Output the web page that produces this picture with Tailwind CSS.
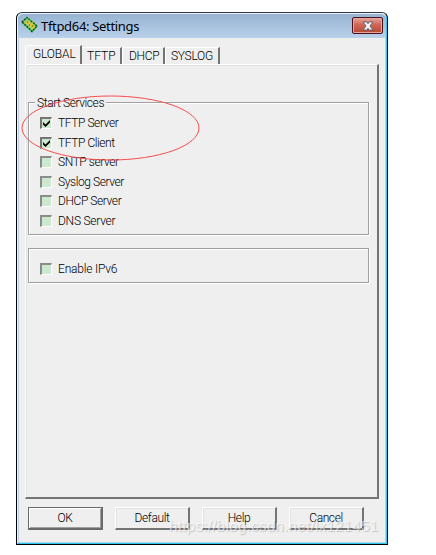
<!DOCTYPE html>
<html lang="en">
<head>
<meta charset="utf-8">
<title>Tftpd64: Settings</title>
<script src="https://cdn.jsdelivr.net/npm/@tailwindcss/browser@4"></script>
</head>
<body class="bg-white w-[436px] h-[555px] overflow-hidden pl-4 pt-3 font-[Roboto,'Liberation_Sans',sans-serif] font-[350] text-[12px] leading-[14px] text-black">
<main class="relative w-[372px] h-[533px] flex flex-col bg-[#efefef] border border-black border-t-[#303840] rounded-t-[6px] shadow-[inset_-1px_-1px_0_#25c9ee,inset_1px_1px_0_#e8f4ff,inset_-2px_-2px_0_#b9d1ea,inset_2px_0_0_#b9d1ea]">
  <header class="h-[24px] shrink-0 mx-px mt-px flex items-start rounded-t-[5px] bg-gradient-to-b from-[#98b4d2] to-[#b9d1ea]">
    <svg class="ml-[3px] mt-[2px] shrink-0" width="17" height="18" viewBox="0 0 17 18">
      <path d="M1 6 6 1.500 16 10 11 15.500Z" fill="#9dbd8c" stroke="#20b52c" stroke-width="1.300"/>
      <path d="M1 6 6 1.500 16 10 11 15.500Z" fill="none" stroke="#0a3d12" stroke-width="1.300" stroke-dasharray="1.500 1.500"/>
      <path d="M4 5.500 6.500 8 8 5.500 9 10 11 7.500 11.500 12 13.500 10.500" stroke="#d9c92c" stroke-width="1.700" fill="none"/>
      <path d="M6 6h1M8 9h1M11 10h1" stroke="#5c4d16"/>
    </svg>
    <h1 class="ml-[3px] mt-[4px] text-[13px] leading-[16px] tracking-[-0.32px] whitespace-nowrap font-normal font-['Noto_Sans','Open_Sans',sans-serif]">Tftpd64: Settings</h1>
    <button aria-label="Close" class="ml-auto mr-[3px] mt-[3px] w-[31px] h-[17px] border border-[#481221] rounded-[2px] bg-gradient-to-b from-[#e7a59b] via-[#ce6656] via-45% to-[#b94730] shadow-[inset_0_0_0_1px_#e9a59b] flex justify-center items-center">
      <svg width="12" height="10" viewBox="0 0 13 11"><path d="M1 1h4l1.500 2L8 1h4L8.700 5.500 12 10H8L6.500 8 5 10H1l3.300-4.500Z" fill="#f5f5f5" stroke="#555b70"/></svg>
    </button>
  </header>

  <nav class="flex items-end h-[26px] shrink-0 pl-[8px]">
    <div class="w-[57px] h-[19px] border-l border-t border-white border-r-2 border-r-[#747474] rounded-tl-[2px] pl-[7px] pt-px tracking-[-0.15px]">GLOBAL</div>
    <div class="w-[40px] h-[17px] border-t border-white border-r-2 border-r-[#747474] pl-[5px] pt-px tracking-[0px]">TFTP</div>
    <div class="w-[43px] h-[17px] border-l border-t border-white border-r-2 border-r-[#747474] pl-[6px] pt-px tracking-[-0.3px]">DHCP</div>
    <div class="w-[55px] h-[17px] border-l border-t border-white border-r-2 border-r-[#747474] pl-[5px] pt-px tracking-[-0.3px]">SYSLOG</div>
  </nav>

  <section class="ml-[8px] w-[354px] h-[435px] shrink-0 border-l border-t border-white border-r-2 border-b-2 border-r-[#747474] border-b-[#747474] shadow-[inset_1px_1px_0_#e2e2e2] pl-[2px] pt-[37px] tracking-[-0.42px]">
    <fieldset class="relative w-[341px] h-[133px] border border-[#a0a0a0] shadow-[1px_1px_0_white,inset_1px_1px_0_white]">
      <div class="absolute left-[6px] top-[-7px] px-[2px] bg-[#efefef]">Start Services</div>
      <div class="flex flex-col pt-[10px] pl-[11px]">
        <label class="flex items-center h-[20px]"><span class="w-3 h-3 mr-[6px] bg-[#cce8cf] border-t-2 border-l-2 border-[#747474] border-r border-b border-r-white border-b-white"><svg width="9" height="9" viewBox="0 0 9 9"><path d="m1 3 2.500 2.500L8 1v2.500L3.500 8 1 5.500Z"/></svg></span>TFTP Server</label>
        <label class="flex items-center h-[20px]"><span class="w-3 h-3 mr-[6px] bg-[#cce8cf] border-t-2 border-l-2 border-[#747474] border-r border-b border-r-white border-b-white"><svg width="9" height="9" viewBox="0 0 9 9"><path d="m1 3 2.500 2.500L8 1v2.500L3.500 8 1 5.500Z"/></svg></span>TFTP Client</label>
        <label class="flex items-center h-[18px]"><span class="w-3 h-3 mr-[6px] bg-[#cce8cf] border-t-2 border-l-2 border-[#8b8b8b] border-r border-b border-r-white border-b-white"></span>SNTP server</label>
        <label class="flex items-center h-[20px] mt-px"><span class="w-3 h-3 mr-[6px] bg-[#cce8cf] border-t-2 border-l-2 border-[#8b8b8b] border-r border-b border-r-white border-b-white"></span>Syslog Server</label>
        <label class="flex items-center h-[18px]"><span class="w-3 h-3 mr-[6px] bg-[#cce8cf] border-t-2 border-l-2 border-[#8b8b8b] border-r border-b border-r-white border-b-white"></span>DHCP Server</label>
        <label class="flex items-center h-[20px] mt-px"><span class="w-3 h-3 mr-[6px] bg-[#cce8cf] border-t-2 border-l-2 border-[#8b8b8b] border-r border-b border-r-white border-b-white"></span><span class="tracking-[-0.25px]">DNS Server</span></label>
      </div>
    </fieldset>
    <fieldset class="mt-[13px] w-[341px] h-[35px] border border-[#a0a0a0] shadow-[1px_1px_0_white,inset_1px_1px_0_white] pl-[11px] pt-[10px]">
      <label class="flex items-center h-[20px] tracking-[-0.2px]"><span class="w-3 h-3 mr-[6px] bg-[#cce8cf] border-t-2 border-l-2 border-[#8b8b8b] border-r border-b border-r-white border-b-white"></span>Enable IPv6</label>
    </fieldset>
  </section>

  <footer class="flex pl-[11px] mt-[8px] tracking-[-0.4px]">
    <button class="w-[75px] h-[23px] border border-[#696969] border-r-2 border-b-2 shadow-[inset_1px_1px_0_white,inset_-1px_-1px_0_#a0a0a0]">OK</button>
    <button class="ml-[12px] w-[75px] h-[23px] border-t border-l border-white border-r-2 border-b-2 border-r-[#747474] border-b-[#747474] shadow-[inset_1px_1px_0_#e2e2e2]">Default</button>
    <button class="ml-[12px] w-[75px] h-[23px] border-t border-l border-white border-r-2 border-b-2 border-r-[#747474] border-b-[#747474] shadow-[inset_1px_1px_0_#e2e2e2]">Help</button>
    <button class="ml-[12px] w-[75px] h-[23px] border-t border-l border-white border-r-2 border-b-2 border-r-[#747474] border-b-[#747474] shadow-[inset_1px_1px_0_#e2e2e2]">Cancel</button>
  </footer>
</main>
<svg class="absolute left-0 top-0 pointer-events-none" width="436" height="555"><ellipse cx="110.500" cy="128" rx="88.500" ry="32" fill="none" stroke="#f64e4e"/></svg>
<div class="absolute left-[169px] top-[517px] text-[15px] leading-[18px] tracking-[0.34px] whitespace-nowrap font-normal text-white/60 [text-shadow:1px_1px_1px_rgba(120,120,120,0.35)] font-['Liberation_Sans',sans-serif]">https://blog.csdn.net/lx121451</div>
</body>
</html>
